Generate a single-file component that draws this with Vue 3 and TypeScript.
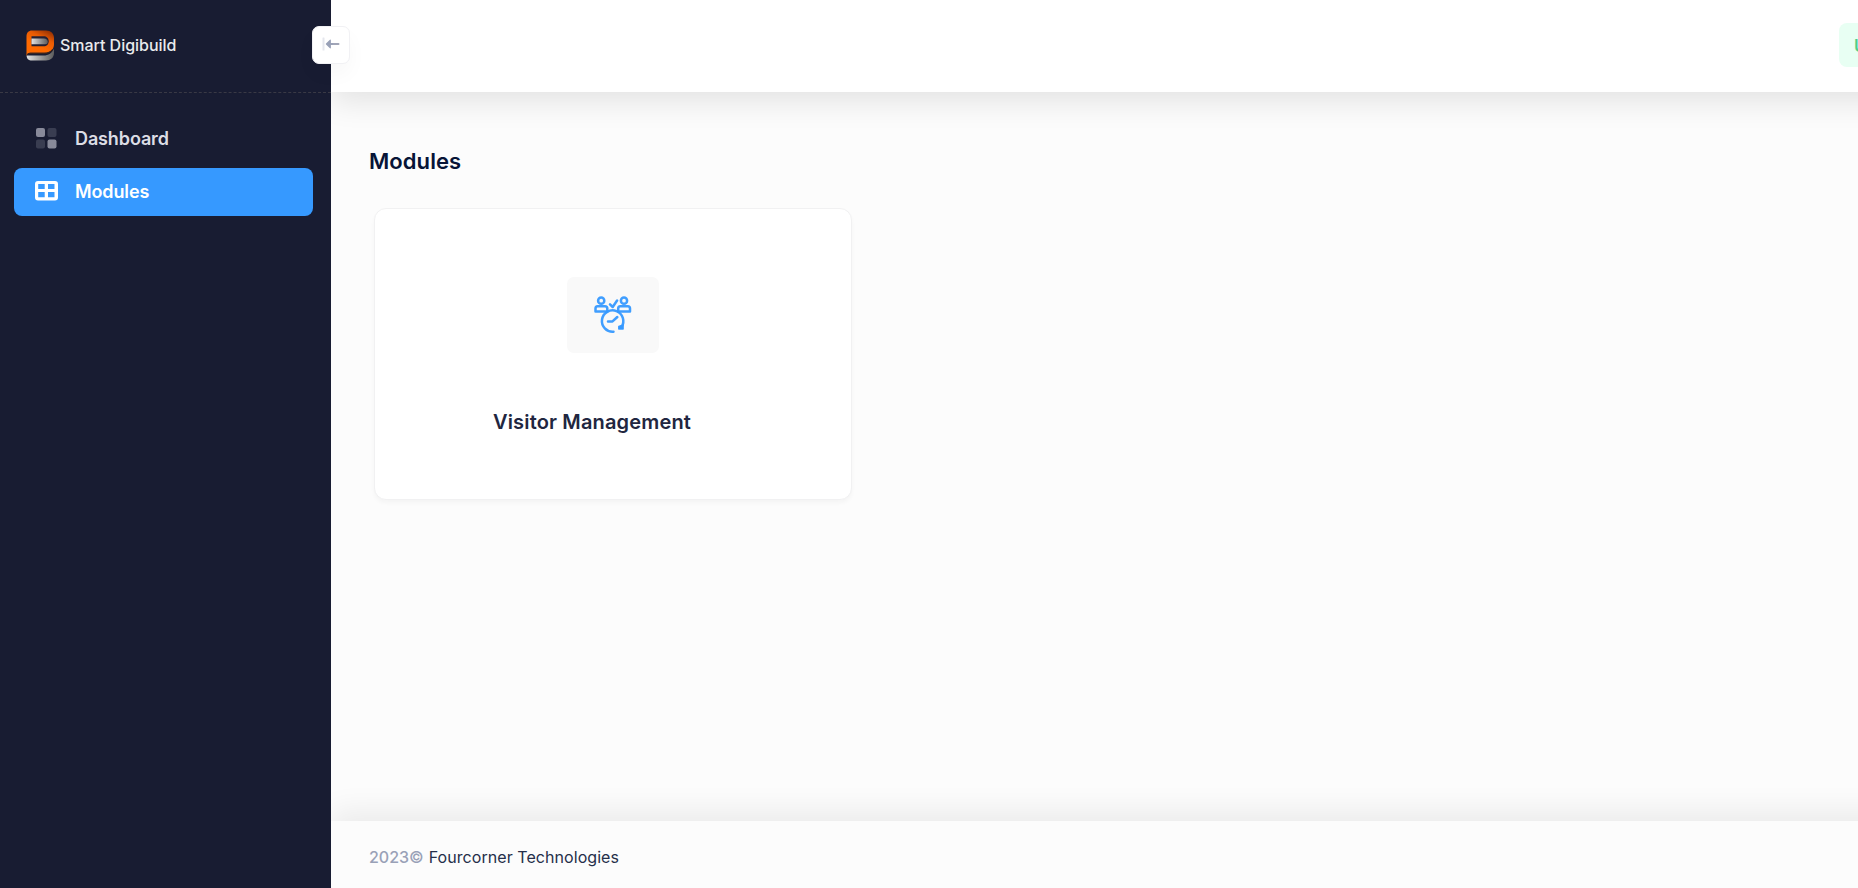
<script setup lang="ts">
interface NavItem {
  label: string
  icon: 'tiles' | 'grid'
  active: boolean
}

const navItems: NavItem[] = [
  { label: 'Dashboard', icon: 'tiles', active: false },
  { label: 'Modules', icon: 'grid', active: true },
]

const modules: string[] = ['Visitor Management']
</script>

<template>
  <div class="shell">
    <aside class="sidebar">
      <div class="brand">
        <svg class="logo" width="28" height="31" viewBox="0 0 28 31">
          <defs>
            <linearGradient id="logo-orange" x1="0.85" y1="0" x2="0.5" y2="0.65">
              <stop offset="0" stop-color="#8f2f04" />
              <stop offset="0.5" stop-color="#e75a04" />
              <stop offset="1" stop-color="#ff6a00" />
            </linearGradient>
            <linearGradient id="logo-silver" x1="0" y1="0" x2="1" y2="0">
              <stop offset="0" stop-color="#e2e2e2" />
              <stop offset="1" stop-color="#5c5c5c" />
            </linearGradient>
          </defs>
          <path d="M0.600 25.500h17c5 0 8.500-2.500 10.400-7v4.500c0 4.600-3.500 7.500-8 7.500H6c-3.500 0-5.400-2-5.400-5z" fill="url(#logo-silver)" />
          <path d="M6 0.500h14c4.800 0 8 3 8 7.500v6.200c0 5-3.700 8.600-9 8.600H4c-1.600 0-2.800 1-3.500 3.200V6.500C0.500 2.800 2.500 0.500 6 0.500z" fill="url(#logo-orange)" />
          <path d="M5.500 6.200H17.500c3.200 0 5.200 2 5.200 5s-2 5-5.200 5H5.500z" fill="#242033" />
          <path d="M5.500 8.500H18c2.300 0 3.800 1.300 3.800 3.200 0 1.700-1.100 2.500-2.500 2.500H5.500z" fill="url(#logo-silver)" />
          <path d="M1.500 24.500q1.200-1.200 3-1.200h14q5 0 8.300-4" fill="none" stroke="#39231f" stroke-width="1.200" />
        </svg>
        <span class="brand-name">Smart Digibuild</span>
        <button class="toggle" type="button" aria-label="Collapse sidebar">
          <svg width="18" height="14" viewBox="0 0 18 14">
            <rect x="0.500" y="0.500" width="2" height="13" rx="0.500" fill="#e5e7ee" />
            <path d="M10 7H16.500" stroke="#a1a5b7" stroke-width="2" stroke-linecap="round" />
            <path d="M4 6.500 7.600 2.900Q8.900 2 8.900 3.600V6H11V8H8.900v2.400q0 1.600-1.300 0.700L4 7.500q-0.500-0.500 0-1z" fill="#99a1b7" />
          </svg>
        </button>
      </div>
      <nav class="nav">
        <a v-for="item in navItems" :key="item.label" class="nav-item" :class="{ active: item.active }">
          <svg v-if="item.icon === 'tiles'" class="nav-icon" width="24" height="24" viewBox="0 0 24 24" fill="#888a9a">
            <rect x="2" y="2" width="9" height="9" rx="2" />
            <rect x="13.500" y="2" width="9" height="9" rx="2" opacity="0.300" />
            <rect x="2" y="13.500" width="9" height="9" rx="2" opacity="0.300" />
            <rect x="13.500" y="13.500" width="9" height="9" rx="2" />
          </svg>
          <svg v-else class="nav-icon" width="24" height="24" viewBox="0 0 24 24">
            <path fill="#fff" fill-rule="evenodd" d="M4 2h17Q24 2 24 5v13.500q0 3-3 3H4q-3 0-3-3V5Q1 2 4 2zM4.200 5v5h6.500V5zM14 5v5h6.500V5zM4.200 13v5.300h6.500V13zM14 13v5.300h6.500V13z" />
          </svg>
          <span>{{ item.label }}</span>
        </a>
      </nav>
    </aside>

    <div class="page">
      <header class="header">
        <div class="user-badge">U</div>
      </header>
      <main class="content">
        <h1 class="title">Modules</h1>
        <section v-for="name in modules" :key="name" class="card">
          <div class="card-icon">
            <svg width="38" height="38" viewBox="0 0 38 38" fill="none" stroke="#3699ff" stroke-opacity="0.950" stroke-width="2.500" stroke-linecap="round" stroke-linejoin="round">
              <circle cx="7.200" cy="4.700" r="3.100" />
              <circle cx="30" cy="4.700" r="3.100" />
              <path d="M3.500 10.300H11q2.300 0 2.300 2.300v3H1.500v-3q0-2.300 2-2.300z" />
              <path d="M26.300 10.300h7.500q2.200 0 2.200 2.300v3H24.200v-3q0-2.300 2.100-2.300z" />
              <path d="M16 8.300l2.700 2.700 4.400-6.500" />
              <path d="M19.500 35.700A10.700 10.700 0 1 1 27.500 31" />
              <path d="M14 25.400h4.500L23.300 21" />
              <path d="M24.800 30.500l4.300-1.500v4h-4.300z" fill="#3699ff" stroke-width="1.500" />
            </svg>
          </div>
          <h2 class="card-title">{{ name }}</h2>
        </section>
      </main>
      <footer class="footer">
        <span class="year">2023©</span>
        <a class="company">Fourcorner Technologies</a>
      </footer>
    </div>
  </div>
</template>

<style>
body {
  overflow: hidden;
}
</style>

<style scoped>
.shell {
  display: flex;
  width: 100%;
  height: 100vh;
  overflow: hidden;
  font-family: Inter, sans-serif;
  background: #fcfcfc;
}

.shell *,
.shell {
  box-sizing: border-box;
}

.sidebar {
  position: relative;
  z-index: 2;
  flex: 0 0 331px;
  background: #181c32;
}

.brand {
  position: relative;
  display: flex;
  align-items: center;
  height: 93px;
  padding: 0 0 2px 26px;
  border-bottom: 1px dashed #393945;
}

.brand-name {
  margin-left: 6px;
  font-size: 16px;
  font-weight: 500;
  letter-spacing: -0.03px;
  line-height: 24px;
  color: #eaebed;
}

.toggle {
  position: absolute;
  top: 26px;
  right: -19px;
  display: flex;
  align-items: center;
  justify-content: center;
  width: 38px;
  height: 38px;
  padding: 0 1px 2px 0;
  background: #fff;
  border: 1px solid #f1f1f4;
  border-radius: 7px;
  box-shadow: 0 10px 20px rgba(0, 0, 0, 0.03);
}

.nav {
  display: flex;
  flex-direction: column;
  gap: 5px;
  padding: 22px 18px 0 14px;
}

.nav-item {
  display: flex;
  align-items: center;
  height: 48px;
  padding: 0 0 2px 20px;
  border-radius: 8px;
  font-size: 18px;
  font-weight: 600;
  letter-spacing: -0.12px;
  color: #dcdde5;
}

.nav-item.active {
  background: #3699ff;
  color: #fff;
}

.nav-icon {
  margin-right: 17px;
}

.page {
  display: flex;
  flex: 1;
  flex-direction: column;
  min-width: 0;
}

.header {
  display: flex;
  flex: 0 0 92px;
  align-items: flex-start;
  margin-right: -60px;
  padding: 23px 0 0 1508px;
  background: #fff;
  box-shadow: 0 10px 30px rgba(0, 0, 0, 0.1);
}

.user-badge {
  flex: 0 0 44px;
  height: 44px;
  padding-left: 15px;
  border-radius: 8px;
  background: #e8fff3;
  font-size: 17px;
  font-weight: 600;
  line-height: 46px;
  color: #50cd89;
}

.content {
  flex: 1;
  padding: 53px 38px 0;
}

.title {
  margin: 0;
  font-size: 22px;
  font-weight: 600;
  letter-spacing: 0.06px;
  line-height: 32px;
  color: #071437;
}

.card {
  display: flex;
  flex-direction: column;
  align-items: center;
  width: 478px;
  height: 292px;
  margin: 31px 0 0 5px;
  padding: 68px 1px 0 0;
  border: 1px solid #f1f1f2;
  border-radius: 12px;
  background: #fff;
  box-shadow: 0 3px 4px rgba(0, 0, 0, 0.03);
}

.card-icon {
  display: flex;
  align-items: center;
  justify-content: center;
  width: 92px;
  height: 76px;
  border-radius: 7px;
  background: #f9f9f9;
}

.card-title {
  margin: 53px 41px 0 0;
  font-size: 20px;
  font-weight: 600;
  letter-spacing: 0.16px;
  line-height: 32px;
  color: #212640;
}

.footer {
  display: flex;
  flex: 0 0 67px;
  align-items: center;
  gap: 5px;
  margin-right: -60px;
  padding: 5px 38px 0;
  font-size: 16px;
  letter-spacing: 0.06px;
  background: #fcfcfc;
  box-shadow: 0 -10px 30px rgba(0, 0, 0, 0.07);
}

.year {
  font-weight: 500;
  letter-spacing: 0;
  color: #99a1b7;
}

.company {
  color: #252f4a;
}
</style>
